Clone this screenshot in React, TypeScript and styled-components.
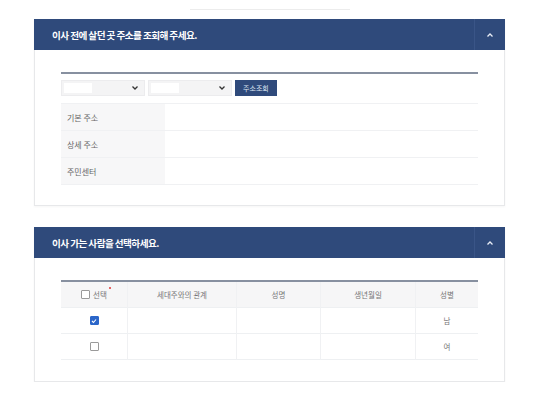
import React from 'react'
import styled, { createGlobalStyle } from 'styled-components'

const GlobalStyle = createGlobalStyle`
  html, body {
    margin: 0;
    padding: 0;
    background: #ffffff;
    font-family: 'Noto Sans CJK KR', 'Noto Sans', sans-serif;
  }
`

const NAVY = '#2f4a7b'

const Page = styled.div`
  display: flex;
  flex-direction: column;
  align-items: flex-start;
  padding: 9px 0 0 34px;
  width: 546px;
  box-sizing: border-box;
`

const TopLine = styled.div`
  width: 160px;
  height: 1px;
  margin-left: 156px;
  background: #ececec;
`

const Panel = styled.section<{ $top: number }>`
  width: 471px;
  margin-top: ${(p) => p.$top}px;
  border: 1px solid #e7e8ea;
  border-top: none;
  box-sizing: border-box;
  background: #fff;
  box-shadow: 0 1px 2px rgba(0, 0, 0, 0.04);
`

const Header = styled.div`
  display: flex;
  align-items: center;
  height: 31px;
  margin: 0 -1px;
  background: ${NAVY};
  color: #fff;
`

const Title = styled.h2`
  flex: 1;
  margin: 0;
  padding-left: 18px;
  font-size: 9.6px;
  font-weight: 700;
  letter-spacing: -0.55px;
`

const Toggle = styled.div`
  display: flex;
  align-items: center;
  justify-content: center;
  width: 30px;
  height: 100%;
  border-left: 1px solid #3a5587;
`

const Body = styled.div<{ $pt: number; $pb: number }>`
  padding: ${(p) => p.$pt}px 26px ${(p) => p.$pb}px 26px;
`

const Rule = styled.div`
  height: 2px;
  background: #8790a0;
`

const Toolbar = styled.div`
  display: flex;
  align-items: center;
  gap: 3px;
  padding: 6px 0 7px;
  border-bottom: 1px solid #f0f1f3;
`

const Select = styled.div`
  display: flex;
  align-items: center;
  justify-content: space-between;
  width: 84px;
  height: 16px;
  padding: 0 6px 0 2px;
  box-sizing: border-box;
  background: #f4f4f5;
  border: 1px solid #ececee;
`

const SelectValue = styled.span`
  width: 28px;
  height: 10px;
  background: #fff;
`

const Button = styled.button`
  height: 16px;
  padding: 0 8px;
  border: none;
  background: ${NAVY};
  color: #dfe6f3;
  font-family: inherit;
  font-size: 7px;
  line-height: 16px;
  cursor: pointer;
`

const InfoRow = styled.div`
  display: grid;
  grid-template-columns: 104px 1fr;
  height: 27px;
  border-bottom: 1px solid #f0f1f3;
  box-sizing: border-box;
`

const InfoLabel = styled.div`
  display: flex;
  align-items: center;
  padding-left: 6px;
  background: #f7f7f8;
  color: #666;
  font-size: 8px;
`

const Grid = styled.div`
  display: grid;
  grid-template-columns: 67px 109px 84px 95px 1fr;
`

const Cell = styled.div<{ $head?: boolean }>`
  display: flex;
  align-items: center;
  justify-content: center;
  gap: 3px;
  height: 26px;
  box-sizing: border-box;
  background: ${(p) => (p.$head ? '#f6f6f7' : '#fff')};
  border-right: 1px solid #f0f1f3;
  border-bottom: 1px solid #eef0f2;
  color: #777;
  font-size: 7.5px;
  &:nth-child(5n) {
    border-right: none;
  }
`

const Box = styled.span<{ $checked?: boolean }>`
  display: inline-flex;
  align-items: center;
  justify-content: center;
  width: 7px;
  height: 7px;
  border: 1px solid ${(p) => (p.$checked ? '#2b66c9' : '#9a9a9a')};
  border-radius: 1px;
  background: ${(p) => (p.$checked ? '#2b66c9' : '#fff')};
`

const Req = styled.span`
  position: relative;
  &::after {
    content: '';
    position: absolute;
    top: -2px;
    right: -4px;
    width: 2px;
    height: 2px;
    border-radius: 50%;
    background: #e03535;
  }
`

const Chevron = () => (
  <svg width="8" height="6" viewBox="0 0 8 6">
    <path d="M1.5 4.5 L4 2 L6.5 4.5" stroke="#e8edf6" strokeWidth="1.3" fill="none" />
  </svg>
)

const Down = () => (
  <svg width="6" height="4" viewBox="0 0 6 4">
    <path d="M0.5 0.5 L3 3 L5.5 0.5" stroke="#333" strokeWidth="1.3" fill="none" />
  </svg>
)

const Check = () => (
  <svg width="6" height="6" viewBox="0 0 6 6">
    <path d="M1 3 L2.5 4.5 L5 1.5" stroke="#fff" strokeWidth="1.1" fill="none" />
  </svg>
)

const people = [
  { checked: true, gender: '남' },
  { checked: false, gender: '여' },
]

export default function App() {
  return (
    <Page>
      <GlobalStyle />
      <TopLine />
      <Panel $top={9}>
        <Header>
          <Title>이사 전에 살던 곳 주소를 조회해 주세요.</Title>
          <Toggle>
            <Chevron />
          </Toggle>
        </Header>
        <Body $pt={22} $pb={20}>
          <Rule />
          <Toolbar>
            <Select>
              <SelectValue />
              <Down />
            </Select>
            <Select>
              <SelectValue />
              <Down />
            </Select>
            <Button>주소조회</Button>
          </Toolbar>
          {['기본 주소', '상세 주소', '주민센터'].map((label) => (
            <InfoRow key={label}>
              <InfoLabel>{label}</InfoLabel>
              <div />
            </InfoRow>
          ))}
        </Body>
      </Panel>

      <Panel $top={21}>
        <Header>
          <Title>이사 가는 사람을 선택하세요.</Title>
          <Toggle>
            <Chevron />
          </Toggle>
        </Header>
        <Body $pt={22} $pb={21}>
          <Rule />
          <Grid>
            <Cell $head>
              <Box />
              <Req>선택</Req>
            </Cell>
            <Cell $head>세대주와의 관계</Cell>
            <Cell $head>성명</Cell>
            <Cell $head>생년월일</Cell>
            <Cell $head>성별</Cell>
            {people.map((p) => (
              <React.Fragment key={p.gender}>
                <Cell>
                  <Box $checked={p.checked}>{p.checked && <Check />}</Box>
                </Cell>
                <Cell />
                <Cell />
                <Cell />
                <Cell>{p.gender}</Cell>
              </React.Fragment>
            ))}
          </Grid>
        </Body>
      </Panel>
    </Page>
  )
}
